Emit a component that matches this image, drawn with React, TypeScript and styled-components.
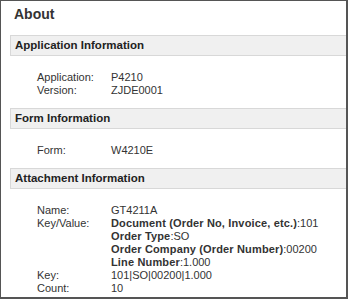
import React from "react"
import styled, { createGlobalStyle } from "styled-components"

interface Row {
  label: string
  value: React.ReactNode
}

interface Section {
  title: string
  rows: Row[]
}

const GlobalStyle = createGlobalStyle`
  body {
    margin: 0;
    background: #fff;
    font-family: "Liberation Sans", Arial, sans-serif;
  }
`

const Window = styled.div`
  box-sizing: border-box;
  width: 348px;
  height: 299px;
  overflow: hidden;
  border-style: solid;
  border-color: #555;
  border-width: 1px 2px 2px 1px;
  padding-left: 9px;
  color: #333;
`

const Title = styled.h1`
  margin: 3px 0 11px 4px;
  font-size: 14px;
  line-height: 20px;
  font-weight: bold;
  color: #333;
`

const SectionHeader = styled.div`
  box-sizing: border-box;
  height: 21px;
  padding-left: 4px;
  background: #f0f0f0;
  border: 1px solid #d8d8d8;
  border-right: none;
  font-size: 11.5px;
  font-weight: bold;
  line-height: 19px;
  color: #222;
`

const InfoGrid = styled.div`
  display: grid;
  grid-template-columns: 74px auto;
  margin: 15px 0 11px 27px;
  font-size: 11px;
  line-height: 13px;
`

const Label = styled.div`
  color: #333;
`

const Value = styled.div`
  color: #333;
`

const KeyLine = styled.div`
  b {
    font-weight: bold;
    letter-spacing: 0.15px;
  }
`

const keyValues = [
  { key: "Document (Order No, Invoice, etc.)", value: "101" },
  { key: "Order Type", value: "SO" },
  { key: "Order Company (Order Number)", value: "00200" },
  { key: "Line Number", value: "1.000" },
]

const sections: Section[] = [
  {
    title: "Application Information",
    rows: [
      { label: "Application:", value: "P4210" },
      { label: "Version:", value: "ZJDE0001" },
    ],
  },
  {
    title: "Form Information",
    rows: [{ label: "Form:", value: "W4210E" }],
  },
  {
    title: "Attachment Information",
    rows: [
      { label: "Name:", value: "GT4211A" },
      {
        label: "Key/Value:",
        value: keyValues.map((kv) => (
          <KeyLine key={kv.key}>
            <b>{kv.key}</b>:{kv.value}
          </KeyLine>
        )),
      },
      { label: "Key:", value: "101|SO|00200|1.000" },
      { label: "Count:", value: "10" },
    ],
  },
]

const App: React.FC = () => {
  return (
    <>
      <GlobalStyle />
      <Window>
        <Title>About</Title>
        {sections.map((section) => (
          <div key={section.title}>
            <SectionHeader>{section.title}</SectionHeader>
            <InfoGrid>
              {section.rows.map((row) => (
                <React.Fragment key={row.label}>
                  <Label>{row.label}</Label>
                  <Value>{row.value}</Value>
                </React.Fragment>
              ))}
            </InfoGrid>
          </div>
        ))}
      </Window>
    </>
  )
}

export default App
